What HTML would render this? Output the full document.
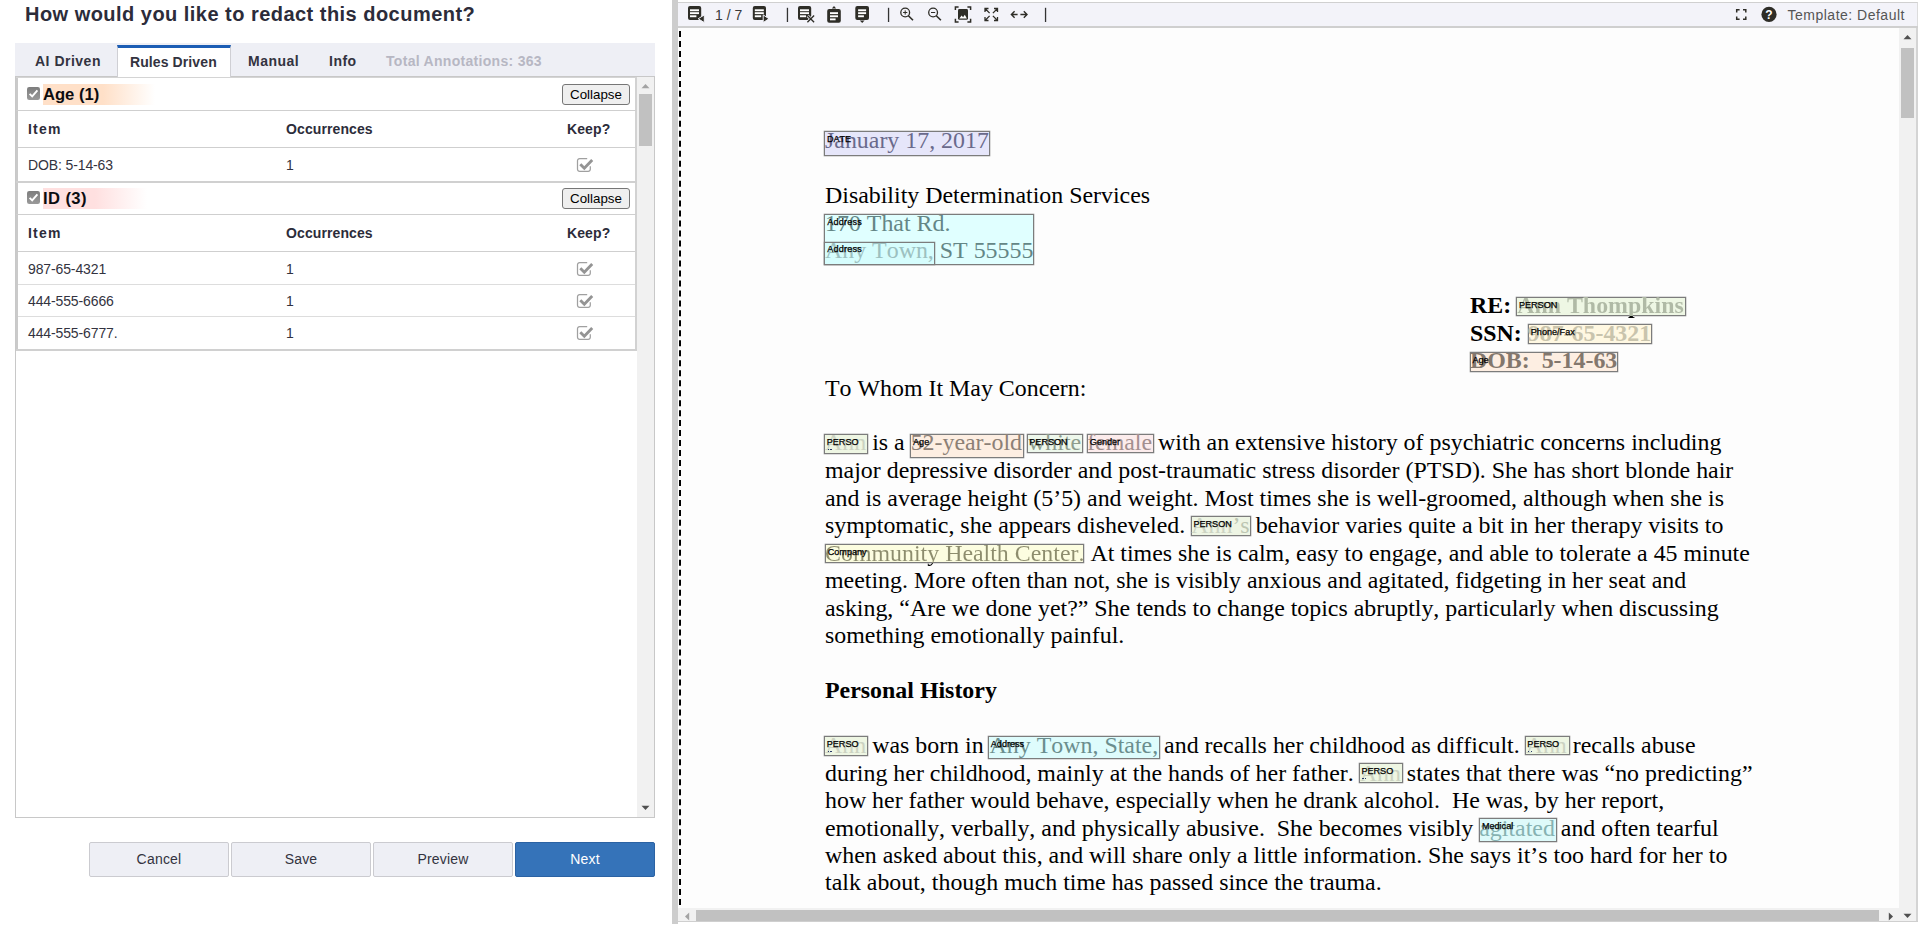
<!DOCTYPE html>
<html>
<head>
<meta charset="utf-8">
<title>Redact</title>
<style>
html,body{margin:0;padding:0;}
body{width:1920px;height:944px;overflow:hidden;background:#fff;position:relative;font-family:"Liberation Sans",sans-serif;color:#333340;}
.abs{position:absolute;}
.t{position:absolute;white-space:pre;line-height:1;}
/* ---------- left panel ---------- */
#title{left:25px;top:3px;font-size:20px;font-weight:700;color:#2c2c3a;letter-spacing:.47px;line-height:22px;}
#tabbar{left:15px;top:43px;width:640px;height:33px;background:#eeeff5;}
#tabline{left:15px;top:76px;width:640px;height:1px;background:#c8c8c8;}
#acttab{left:117px;top:45px;width:112px;height:29px;background:#fff;border-top:3px solid #1c5db4;border-left:1px solid #cfcfd4;border-right:1px solid #cfcfd4;}
.tab{font-size:14px;font-weight:700;color:#333340;top:54px;line-height:14px;letter-spacing:.5px;}
#listbox{left:15px;top:76px;width:638px;height:740px;border:1px solid #c8c8c8;background:#fff;}
.grp{left:16px;width:619px;border:1px solid #cdcdcd;border-left-width:2px;box-sizing:border-box;background:#fff;}
.hl{position:absolute;left:16px;width:620px;height:1px;background:#cfcfcf;}
.hl2{position:absolute;left:18px;width:617px;height:1px;background:#dddddd;}
.gl{font-size:16.6px;font-weight:700;color:#0c0c10;line-height:21px;height:21px;left:43px;padding-right:56px;}
.th{font-size:14px;font-weight:700;color:#2c2c3a;line-height:14px;letter-spacing:.1px;}
.td{font-size:14px;color:#333340;line-height:14px;letter-spacing:-.12px;}
.cbtn{position:absolute;left:562px;width:66px;height:19px;border:1px solid #767676;border-radius:3px;background:#efefef;font-size:13.33px;line-height:19px;text-align:center;color:#000;}
.btn{position:absolute;top:842px;width:138px;height:33px;border:1px solid #cbcbd0;border-radius:2px;background:#eeeff5;font-size:14px;line-height:33px;text-align:center;color:#333340;letter-spacing:.2px;}
#next{background:#3573b9;border-color:#2b62a3;color:#fff;}
/* ---------- viewer ---------- */
#split{left:672px;top:0;width:6px;height:924px;background:#cdcdcd;}
#tbar{left:678px;top:2px;width:1239px;height:24px;background:#f3f3f9;border-top:1px solid #d0d0d0;border-right:1px solid #dcdcdc;box-sizing:content-box;}
#tbarline{left:678px;top:26px;width:1240px;height:2px;background:#cfcfcf;}
.sep{position:absolute;top:8px;width:1.3px;height:14px;background:#333;}
#dash{left:679px;top:31px;width:0;height:874px;border-left:2px dashed #000;}
#page{left:678px;top:28px;width:1221px;height:880px;background:#fdfdfd;overflow:hidden;}
#vsb{left:1899px;top:28px;width:17px;height:893px;background:#f1f1f1;}
#vsbr{left:1916px;top:28px;width:2px;height:894px;background:#d4d4d4;}
#vbot{left:678px;top:921px;width:1240px;height:1px;background:#cfcfcf;}
#hsb{left:678px;top:908px;width:1221px;height:13px;background:#f1f1f1;}
.thumb{position:absolute;background:#c1c1c1;}
/* ---------- document ---------- */
.ln{position:absolute;font-kerning:none;font-variant-ligatures:none;white-space:pre;font-family:"Liberation Serif",serif;font-size:23.9px;line-height:28px;height:28px;color:#000;left:825px;}
.b{font-weight:700;}
.box{position:absolute;border:1px solid #7c7c7c;box-sizing:border-box;box-shadow:0 0 0 .35px rgba(128,128,128,.75);}
.lb{position:absolute;font-family:"Liberation Sans",sans-serif;font-size:9.1px;line-height:9px;color:#000;white-space:pre;-webkit-text-stroke:.25px #000;z-index:3;}
.an{position:relative;z-index:0;}
.an .bx{position:absolute;z-index:-1;border:1px solid #7c7c7c;box-sizing:border-box;box-shadow:0 0 0 .35px rgba(128,128,128,.75);}
.an .lb{font-style:normal;font-weight:400;}
.dot{position:absolute;width:1.2px;height:1.2px;background:#2a3a6a;}
</style>
</head>
<body>

<!-- ================= LEFT PANEL ================= -->
<div class="t" id="title">How would you like to redact this document?</div>
<div class="abs" id="tabbar"></div>
<div class="abs" id="listbox"></div>
<div class="abs" id="tabline"></div>
<div class="abs" id="acttab"></div>
<div class="t tab" style="left:35px;">AI Driven</div>
<div class="t tab" style="left:130px;top:55px;letter-spacing:.1px;">Rules Driven</div>
<div class="t tab" style="left:248px;">Manual</div>
<div class="t tab" style="left:329px;">Info</div>
<div class="t tab" style="left:386px;color:#b7b7c3;letter-spacing:.3px;">Total Annotations: 363</div>

<!-- list content -->
<div class="abs" style="left:16px;top:77px;width:2px;height:274px;background:#cacaca;"></div>
<div class="abs" style="left:635px;top:77px;width:2px;height:274px;background:#d2d2d2;"></div>
<div class="abs" style="left:16px;top:77px;width:621px;height:1px;background:#d4d4d4;"></div>
<!-- group 1 -->
<svg class="abs" style="left:27px;top:87px;" width="13" height="13" viewBox="0 0 13 13"><defs><linearGradient id="cg" x1="0" y1="0" x2="0" y2="1"><stop offset="0" stop-color="#7d7d7d"/><stop offset="1" stop-color="#9a9a9a"/></linearGradient></defs><rect x="0" y="0" width="13" height="13" rx="2.2" fill="url(#cg)"/><path d="M2.6 6.8 L5.2 9.4 L10.4 3.4" stroke="#fff" stroke-width="1.9" fill="none"/></svg>
<div class="t gl" style="top:84px;background:linear-gradient(to right,#ffe0c8 0,#ffe0c8 60px,rgba(255,224,200,0) 100%);">Age (1)</div>
<div class="cbtn" style="top:84px;">Collapse</div>
<div class="hl" style="top:110px;"></div>
<div class="t th" style="left:28px;top:122px;letter-spacing:1.2px;">Item</div>
<div class="t th" style="left:286px;top:122px;">Occurrences</div>
<div class="t th" style="left:567px;top:122px;">Keep?</div>
<div class="hl" style="top:147px;left:18px;width:617px;"></div>
<div class="t td" style="left:28px;top:158px;">DOB: 5-14-63</div>
<div class="t td" style="left:286px;top:158px;">1</div>
<svg class="abs chk" style="left:576px;top:157px;" width="18" height="16" viewBox="0 0 18 16"><path d="M11.2 1.6 H3.6 a2.1 2.1 0 0 0 -2.1 2.1 V12.3 a2.1 2.1 0 0 0 2.1 2.1 H12.2 a2.1 2.1 0 0 0 2.1 -2.1 V9.2" fill="none" stroke="#a0a0a0" stroke-width="1.25"/><path d="M4.3 7.2 L8.3 11.2 L16.2 3.1" stroke="#949494" stroke-width="2.9" fill="none"/></svg>
<div class="abs" style="left:16px;top:181px;width:621px;height:2px;background:#d0d0d0;"></div>
<!-- group 2 -->
<svg class="abs" style="left:27px;top:191px;" width="13" height="13" viewBox="0 0 13 13"><rect x="0" y="0" width="13" height="13" rx="2.2" fill="url(#cg)"/><path d="M2.6 6.8 L5.2 9.4 L10.4 3.4" stroke="#fff" stroke-width="1.9" fill="none"/></svg>
<div class="t gl" style="top:188px;padding-right:60px;letter-spacing:.4px;background:linear-gradient(to right,#ffe0e0 0,#ffe0e0 52px,rgba(255,224,224,0) 100%);">ID (3)</div>
<div class="cbtn" style="top:188px;">Collapse</div>
<div class="hl" style="top:214px;"></div>
<div class="t th" style="left:28px;top:226px;letter-spacing:1.2px;">Item</div>
<div class="t th" style="left:286px;top:226px;">Occurrences</div>
<div class="t th" style="left:567px;top:226px;">Keep?</div>
<div class="hl" style="top:251px;left:18px;width:617px;"></div>
<div class="t td" style="left:28px;top:262px;">987-65-4321</div>
<div class="t td" style="left:286px;top:262px;">1</div>
<svg class="abs chk" style="left:576px;top:260.5px;" width="18" height="16" viewBox="0 0 18 16"><path d="M11.2 1.6 H3.6 a2.1 2.1 0 0 0 -2.1 2.1 V12.3 a2.1 2.1 0 0 0 2.1 2.1 H12.2 a2.1 2.1 0 0 0 2.1 -2.1 V9.2" fill="none" stroke="#a0a0a0" stroke-width="1.25"/><path d="M4.3 7.2 L8.3 11.2 L16.2 3.1" stroke="#949494" stroke-width="2.9" fill="none"/></svg>
<div class="hl2" style="top:284px;"></div>
<div class="t td" style="left:28px;top:294px;">444-555-6666</div>
<div class="t td" style="left:286px;top:294px;">1</div>
<svg class="abs chk" style="left:576px;top:293px;" width="18" height="16" viewBox="0 0 18 16"><path d="M11.2 1.6 H3.6 a2.1 2.1 0 0 0 -2.1 2.1 V12.3 a2.1 2.1 0 0 0 2.1 2.1 H12.2 a2.1 2.1 0 0 0 2.1 -2.1 V9.2" fill="none" stroke="#a0a0a0" stroke-width="1.25"/><path d="M4.3 7.2 L8.3 11.2 L16.2 3.1" stroke="#949494" stroke-width="2.9" fill="none"/></svg>
<div class="hl2" style="top:316px;"></div>
<div class="t td" style="left:28px;top:326px;">444-555-6777.</div>
<div class="t td" style="left:286px;top:326px;">1</div>
<svg class="abs chk" style="left:576px;top:325px;" width="18" height="16" viewBox="0 0 18 16"><path d="M11.2 1.6 H3.6 a2.1 2.1 0 0 0 -2.1 2.1 V12.3 a2.1 2.1 0 0 0 2.1 2.1 H12.2 a2.1 2.1 0 0 0 2.1 -2.1 V9.2" fill="none" stroke="#a0a0a0" stroke-width="1.25"/><path d="M4.3 7.2 L8.3 11.2 L16.2 3.1" stroke="#949494" stroke-width="2.9" fill="none"/></svg>
<div class="abs" style="left:16px;top:349px;width:621px;height:2px;background:#d0d0d0;"></div>
<!-- list scrollbar -->
<div class="abs" style="left:637px;top:77px;width:17px;height:740px;background:#f1f1f1;"></div>
<div class="thumb" style="left:639px;top:94px;width:13px;height:52px;"></div>
<svg class="abs" style="left:641px;top:83px;" width="9" height="6" viewBox="0 0 9 6"><path d="M0.5 5.2 L4.5 1 L8.5 5.2 Z" fill="#a3a3a3"/></svg>
<svg class="abs" style="left:641px;top:805px;" width="9" height="6" viewBox="0 0 9 6"><path d="M0.5 0.8 L4.5 5 L8.5 0.8 Z" fill="#505050"/></svg>


<!-- buttons -->
<div class="btn" style="left:89px;">Cancel</div>
<div class="btn" style="left:231px;">Save</div>
<div class="btn" style="left:373px;">Preview</div>
<div class="btn" id="next" style="left:515px;">Next</div>

<!-- ================= VIEWER ================= -->
<div class="abs" id="split"></div>
<div class="abs" id="page"></div>
<div class="abs" id="tbar"></div>
<div class="abs" id="tbarline"></div>
<div class="abs" id="dash"></div>
<div class="abs" id="vsb"></div>
<div class="abs" id="vsbr"></div>
<div class="abs" id="hsb"></div>
<div class="abs" id="vbot"></div>

<!-- toolbar icons -->
<svg class="abs" style="left:678px;top:0;" width="1240" height="28" viewBox="678 0 1240 28">
<g fill="#2e2d27" stroke="none">
<!-- prev page -->
<rect x="688" y="6" width="13.2" height="14.1" rx="2"/>
<path d="M698.2 18.75 L704.3 14.9 L704.3 22.6 Z" stroke="#f3f3f9" stroke-width="1"/>
<!-- next page -->
<rect x="752.8" y="6" width="13.2" height="14.1" rx="2"/>
<path d="M769 18.75 L763.2 14.9 L763.2 22.6 Z" stroke="#f3f3f9" stroke-width="1"/>
<!-- doc x -->
<rect x="798" y="6" width="13.2" height="14.1" rx="2"/>
<!-- clipboard up -->
<rect x="827.2" y="9" width="13.6" height="13.8" rx="2"/>
<path d="M834 5.9 L836.2 8.5 L831.8 8.5 Z"/>
<!-- doc down -->
<rect x="855.3" y="6" width="13.7" height="14.1" rx="2"/>
<path d="M862.2 23 L864.6 20.5 L859.8 20.5 Z"/>
<!-- fit -->
<rect x="958" y="9" width="10" height="10.8" rx="1.4"/>
<!-- help -->
<circle cx="1769" cy="14.4" r="7.6"/>
</g>
<g fill="#fff">
<rect x="690" y="9.3" width="9" height="1.9"/><rect x="690" y="12.2" width="9" height="1.9"/><rect x="690" y="15.3" width="6.4" height="1.9"/>
<rect x="754.8" y="9.3" width="9" height="1.9"/><rect x="754.8" y="12.2" width="9" height="1.9"/><rect x="754.8" y="15.3" width="6.4" height="1.9"/>
<rect x="800" y="9.3" width="9" height="1.9"/><rect x="800" y="12.2" width="9" height="1.9"/><rect x="800" y="15.3" width="6" height="1.9"/>
<rect x="830" y="12.2" width="8" height="1.9"/><rect x="830" y="15.3" width="8" height="1.9"/><rect x="830" y="18.4" width="5.6" height="1.9"/>
<rect x="858.1" y="9.3" width="8" height="1.9"/><rect x="858.1" y="12.2" width="8" height="1.9"/><rect x="858.1" y="15.3" width="5.8" height="1.9"/>
<path d="M959.3 18.6 L961.6 15.4 L963.1 17.2 L964.8 14.7 L966.9 18.6 Z"/>
</g>
<!-- X on doc -->
<g stroke="#f3f3f9" stroke-width="3" fill="none"><path d="M807.6 15.8 L813.9 22 M813.9 15.8 L807.6 22"/></g>
<g stroke="#2e2d27" stroke-width="1.35" fill="none"><path d="M807.4 15.6 L814.1 22.2 M814.1 15.6 L807.4 22.2"/></g>
<!-- separators -->
<g fill="#333"><rect x="786.8" y="7.8" width="1.3" height="14.2"/><rect x="887.9" y="7.8" width="1.3" height="14.2"/><rect x="1044.9" y="7.8" width="1.3" height="14.2"/></g>
<!-- zoom in/out -->
<g stroke="#2e2d27" fill="none">
<circle cx="905.2" cy="12.5" r="4.4" stroke-width="1.3"/><path d="M908.4 15.7 L913 20.3" stroke-width="1.6"/><path d="M903.1 12.5 H907.3 M905.2 10.4 V14.6" stroke-width="1"/>
<circle cx="933.1" cy="12.5" r="4.4" stroke-width="1.3"/><path d="M936.3 15.7 L940.9 20.3" stroke-width="1.6"/><path d="M931 12.5 H935.2" stroke-width="1"/>
<!-- fit brackets -->
<path d="M955.4 10 V6.9 H958.6 M967.4 6.9 H970.6 V10 M970.6 18.8 V21.9 H967.4 M958.6 21.9 H955.4 V18.8" stroke-width="1.5"/>
<!-- expand arrows -->
<path d="M985 12 V8.5 H988.5 M985.3 8.8 L989.6 13.1 M994 8.5 H997.5 V12 M997.2 8.8 L992.9 13.1 M985 17 V20.5 H988.5 M985.3 20.2 L989.6 15.9 M994 20.5 H997.5 V17 M997.2 20.2 L992.9 15.9" stroke-width="1.3"/>
<!-- left right arrows -->
<path d="M1011.6 14.5 H1017.6 M1014.6 11.3 L1011.4 14.5 L1014.6 17.7 M1020.4 14.5 H1026.8 M1023.8 11.3 L1027 14.5 L1023.8 17.7" stroke-width="1.4"/>
<!-- fullscreen brackets -->
<path d="M1736.7 12.6 V9.8 H1739.6 M1743 9.8 H1745.8 V12.6 M1745.8 16.4 V19.2 H1743 M1739.6 19.2 H1736.7 V16.4" stroke-width="1.5"/>
</g>
<text x="1769" y="18.6" text-anchor="middle" font-family="Liberation Sans, sans-serif" font-weight="700" font-size="12" fill="#fff">?</text>
</svg>
<div class="t" style="left:715px;top:8.2px;font-size:14px;line-height:14px;color:#3a3a3a;">1 / 7</div>
<div class="t" style="left:1787.5px;top:8px;font-size:14px;line-height:14px;color:#555;letter-spacing:.5px;">Template: Default</div>


<!-- viewer scrollbars -->
<div class="thumb" style="left:1901px;top:48px;width:13px;height:70px;"></div>
<svg class="abs" style="left:1903px;top:34px;" width="9" height="6" viewBox="0 0 9 6"><path d="M0.5 5.2 L4.5 1 L8.5 5.2 Z" fill="#505050"/></svg>
<svg class="abs" style="left:1903px;top:913px;" width="9" height="6" viewBox="0 0 9 6"><path d="M0.5 0.8 L4.5 5 L8.5 0.8 Z" fill="#505050"/></svg>
<div class="thumb" style="left:696px;top:910px;width:1183px;height:11px;"></div>
<svg class="abs" style="left:684px;top:912px;" width="6" height="9" viewBox="0 0 6 9"><path d="M5.2 0.5 L1 4.5 L5.2 8.5 Z" fill="#a3a3a3"/></svg>
<svg class="abs" style="left:1888px;top:912px;" width="6" height="9" viewBox="0 0 6 9"><path d="M0.8 0.5 L5 4.5 L0.8 8.5 Z" fill="#505050"/></svg>


<!--DOCSTART-->
<!-- document -->
<div class="ln" style="top:126px;left:825px;"><span class="an" style="color:#6a6a8c;"><i class="bx" style="left:-0.8px;right:-1.2px;top:4.00px;height:25.00px;background:#e6e6fa;"></i>January 17, 2017<i class="lb" style="left:1.90px;top:8.00px;">DATE</i></span></div>
<div class="ln" style="top:181px;left:825px;">Disability Determination Services</div>
<div class="box" style="left:824px;top:214px;width:210px;height:51px;background:#e0ffff;"></div>
<div class="box" style="left:824px;top:242px;width:111px;height:23px;background:#d6fdfd;"></div>
<div class="ln" style="top:209px;left:825px;"><span style="color:#648686">170 That Rd.</span></div>
<div class="ln" style="top:236px;left:825px;"><span style="color:#9cc0c0">Any Town,</span><span style="color:#648686;"> ST 55555</span></div>
<div class="lb" style="left:827.2px;top:217.5px;letter-spacing:.22px;">Address</div>
<div class="lb" style="left:827.2px;top:245.2px;letter-spacing:.22px;">Address</div>
<div class="ln b" style="top:291px;left:1470px;">RE: <span class="an" style="color:#b0baa6;"><i class="bx" style="left:-0.9px;right:-2.6px;top:5.00px;height:19.00px;background:#eef7e4;"></i><span style="color:transparent;background:linear-gradient(to bottom,#b0baa6 0,#b0baa6 24.00px,#000 24.00px);-webkit-background-clip:text;background-clip:text;">Ann Thompkins</span><i class="lb" style="left:1.80px;top:9.00px;">PERSON</i></span></div>
<div class="ln b" style="top:319px;left:1470px;">SSN: <span class="an" style="color:#c9c4ad;"><i class="bx" style="left:0.3px;right:-0.7px;top:4.00px;height:20.00px;background:#fff8e2;"></i>987-65-4321<i class="lb" style="left:3.00px;top:8.00px;">Phone/Fax</i></span></div>
<div class="ln b" style="top:346px;left:1470px;"><span class="an" style="color:#83776d;"><i class="bx" style="left:-0.3px;right:-0.8px;top:5.00px;height:20.00px;background:#fdeee2;"></i>DOB:  5-14-63<i class="lb" style="left:2.40px;top:9.00px;">Age</i></span></div>
<div class="ln" style="top:374px;left:825px;">To Whom It May Concern:</div>
<div class="ln" style="top:428px;left:825px;"><span class="an" style="color:#ccd3c2;"><i class="bx" style="left:-1px;right:-2.2px;top:5.00px;height:20.00px;background:#eef6e3;"></i>Ann<i class="lb" style="left:1.70px;top:9.00px;">PERSO</i><i class="dot" style="left:2.60px;top:19.60px;"></i><i class="dot" style="left:5.40px;top:19.60px;"></i></span> is a <span class="an" style="color:#8c8076;"><i class="bx" style="left:-0.3px;right:-1.9px;top:5.00px;height:24.00px;background:#fdeee2;"></i>52-year-old<i class="lb" style="left:2.40px;top:9.00px;">Age</i></span> <span class="an" style="color:#8e9d8e;"><i class="bx" style="left:-1.5px;right:-2px;top:5.00px;height:19.00px;background:#eef8ec;"></i>white<i class="lb" style="left:1.20px;top:9.00px;">PERSON</i></span> <span class="an" style="color:#a38f8f;"><i class="bx" style="left:0px;right:-1.6px;top:5.00px;height:19.00px;background:#fcecec;"></i>female<i class="lb" style="left:2.70px;top:9.00px;">Gender</i></span> with an extensive history of psychiatric concerns including</div>
<div class="ln" style="top:456px;left:825px;">major depressive disorder and post-traumatic stress disorder (PTSD). She has short blonde hair</div>
<div class="ln" style="top:484px;left:825px;">and is average height (5’5) and weight. Most times she is well-groomed, although when she is</div>
<div class="ln" style="top:511px;left:825px;">symptomatic, she appears disheveled. <span class="an" style="color:#bcc6b2;"><i class="bx" style="left:-0.5px;right:-1.4px;top:4.00px;height:20.00px;background:#eef5e4;"></i><span style="color:#cdd4c3">Ann</span>’s<i class="lb" style="left:2.20px;top:8.00px;">PERSON</i></span> behavior varies quite a bit in her therapy visits to</div>
<div class="ln" style="top:539px;left:825px;"><span class="an" style="color:#8d8d6e;"><i class="bx" style="left:0px;right:0px;top:4.00px;height:19.00px;background:#fcfde0;"></i><span style="color:transparent;background:linear-gradient(to bottom,#8d8d6e 0,#8d8d6e 23.00px,#000 23.00px);-webkit-background-clip:text;background-clip:text;">Community Health Center.</span><i class="lb" style="left:2.70px;top:8.00px;">Company</i></span> At times she is calm, easy to engage, and able to tolerate a 45 minute</div>
<div class="ln" style="top:566px;left:825px;">meeting. More often than not, she is visibly anxious and agitated, fidgeting in her seat and</div>
<div class="ln" style="top:594px;left:825px;">asking, “Are we done yet?” She tends to change topics abruptly, particularly when discussing</div>
<div class="ln" style="top:621px;left:825px;">something emotionally painful.</div>
<div class="ln b" style="top:676px;left:825px;">Personal History</div>
<div class="ln" style="top:731px;left:825px;"><span class="an" style="color:#ccd3c2;"><i class="bx" style="left:-1px;right:-2.3px;top:4.00px;height:20.00px;background:#eef6e3;"></i>Ann<i class="lb" style="left:1.70px;top:8.00px;">PERSO</i><i class="dot" style="left:2.60px;top:18.60px;"></i><i class="dot" style="left:5.40px;top:18.60px;"></i></span> was born in <span class="an" style="color:#6b8e8e;"><i class="bx" style="left:-1.5px;right:-1.7px;top:4.00px;height:23.00px;background:#defcfc;"></i>Any Town, State,<i class="lb" style="left:1.20px;top:8.00px;">Address</i></span> and recalls her childhood as difficult. <span class="an" style="color:#ccd3c2;"><i class="bx" style="left:-1px;right:-3px;top:4.00px;height:19.00px;background:#eef6e3;"></i>Ann<i class="lb" style="left:1.70px;top:8.00px;">PERSO</i><i class="dot" style="left:2.60px;top:18.60px;"></i><i class="dot" style="left:5.40px;top:18.60px;"></i></span> recalls abuse</div>
<div class="ln" style="top:759px;left:825px;">during her childhood, mainly at the hands of her father. <span class="an" style="color:#ccd3c2;"><i class="bx" style="left:-1px;right:-2.3px;top:3.00px;height:20.00px;background:#eef6e3;"></i>Ann<i class="lb" style="left:1.70px;top:7.00px;">PERSO</i><i class="dot" style="left:2.60px;top:17.60px;"></i><i class="dot" style="left:5.40px;top:17.60px;"></i></span> states that there was “no predicting”</div>
<div class="ln" style="top:786px;left:825px;">how her father would behave, especially when he drank alcohol.  He was, by her report,</div>
<div class="ln" style="top:814px;left:825px;">emotionally, verbally, and physically abusive.  She becomes visibly <span class="an" style="color:#86b2b2;"><i class="bx" style="left:0px;right:-2.5px;top:3.00px;height:24.00px;background:#defafa;"></i>agitated<i class="lb" style="left:2.70px;top:7.00px;">Medical</i></span> and often tearful</div>
<div class="ln" style="top:841px;left:825px;">when asked about this, and will share only a little information. She says it’s too hard for her to</div>
<div class="ln" style="top:868px;left:825px;">talk about, though much time has passed since the trauma.</div>
<!--DOCEND-->

</body>
</html>
